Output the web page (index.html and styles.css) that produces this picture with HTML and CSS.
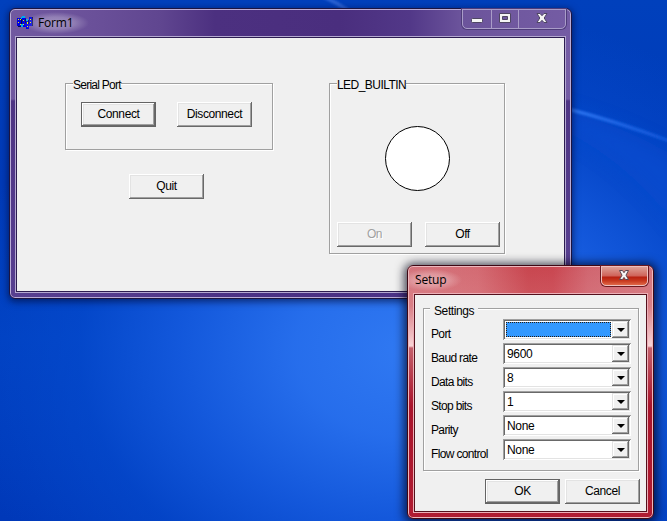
FILE: index.html
```html
<!DOCTYPE html>
<html lang="en">
<head>
<meta charset="utf-8">
<title>Form1</title>
<link rel="stylesheet" href="styles.css">
</head>
<body>
<main class="desktop">
  <svg class="wallpaper" viewBox="0 0 667 521" aria-hidden="true">
    <defs>
      <linearGradient id="beam" x1="571" y1="110" x2="667" y2="142" gradientUnits="userSpaceOnUse">
        <stop offset="0" stop-color="#2d74f0"/><stop offset="1" stop-color="#0f55d8"/>
      </linearGradient>
      <filter id="soft" x="-20%" y="-60%" width="140%" height="220%"><feGaussianBlur stdDeviation="1.2"/></filter>
      <filter id="softer" x="-20%" y="-60%" width="140%" height="220%"><feGaussianBlur stdDeviation="9"/></filter>
    </defs>
    <path d="M540 104Q620 122 680 160V230Q620 150 540 120Z" fill="#0c50d4" opacity=".5" filter="url(#softer)"/>
    <path d="M560 107Q620 122 680 145" fill="none" stroke="url(#beam)" stroke-width="3.500" filter="url(#soft)"/>
    <path d="M322 -4Q336 2 350 12" fill="none" stroke="#2a62d4" stroke-width="4" filter="url(#soft)"/>
  </svg>

  <section class="window form">
    <header class="titlebar">
      <svg class="app-icon" width="17" height="14" viewBox="0 0 17 14" shape-rendering="crispEdges" aria-hidden="true">
        <path fill="#0000e0" d="M0 2h4v8H0zM5 2h4v9H5zM9 4h3v9H9zM12 1h4v9h-4z"/>
        <path fill="#00a8f0" d="M4 1h1v2H4zM5 0h3v2H5zM4 8h2v3H4zM9 3h2v2H9z"/>
        <path fill="#f4f000" d="M1 3h1v1H1zM3 3h1v1H3zM1 6h1v1H1zM3 8h1v1H3zM6 4h1v1H6zM6 8h1v1H6zM10 6h1v2h-1zM10 10h1v1h-1zM13 3h1v1h-1zM13 6h1v1h-1z"/>
        <path fill="#081048" d="M4 3h1v5H4zM8 3h1v4H8zM11 4h1v4h-1zM15 1h1v9h-1zM1 10h3v1H1z"/>
      </svg>
      <h1 class="title">Form1</h1>
      <div class="caption-buttons">
        <span class="cap cap-min"><svg width="12" height="6" viewBox="0 0 12 6"><rect x=".5" y=".5" width="11" height="4" rx="1" fill="#f4f4f4" stroke="#4f4663"/></svg></span>
        <span class="cap cap-max"><svg width="12" height="11" viewBox="0 0 12 11"><path fill="#f4f4f4" stroke="#4f4663" fill-rule="evenodd" d="M.5 .5h11v9H.5zM3.500 3.500v3h5v-3z"/></svg></span>
        <span class="cap cap-close"><svg width="12" height="11" viewBox="0 0 12 11"><path d="M1 .5h3l2 2.200L8 .5h3L8.200 5l2.800 4.500H8L6 7.300 4 9.500H1L3.800 5z" fill="#f4f4f4" stroke="#4f4663"/></svg></span>
      </div>
    </header>
    <div class="client form-client">
      <div class="left-column">
        <div class="group serial">
          <div class="legend serial-legend">Serial Port</div>
          <div class="row"><button class="btn default">Connect</button><button class="btn">Disconnect</button></div>
        </div>
        <button class="btn quit">Quit</button>
      </div>
      <div class="group led">
        <div class="legend led-legend">LED_BUILTIN</div>
        <svg class="lamp" width="65" height="65" viewBox="0 0 65 65"><circle cx="32.5" cy="32.5" r="32" fill="#fff" stroke="#000"/></svg>
        <div class="row"><button class="btn" disabled>On</button><button class="btn">Off</button></div>
      </div>
    </div>
  </section>

  <section class="window setup">
    <header class="titlebar">
      <h1 class="title">Setup</h1>
      <div class="close-red"><svg width="14" height="12" viewBox="0 0 14 12"><path d="M2.500 .5h3l1.500 2.200L8.500 .5h3L9 5.200l2.500 4.300h-3L7 7.400 5.500 9.500h-3L5 5.200z" fill="#f6f6f6" stroke="#5b4550"/></svg></div>
    </header>
    <div class="client setup-client">
      <div class="group settings">
        <div class="legend settings-legend">Settings</div>
        <div class="fields">
          <label>Port</label><div class="combo"><span class="value focused"></span><i class="drop"></i></div>
          <label>Baud rate</label><div class="combo"><span class="value">9600</span><i class="drop"></i></div>
          <label>Data bits</label><div class="combo"><span class="value">8</span><i class="drop"></i></div>
          <label>Stop bits</label><div class="combo"><span class="value">1</span><i class="drop"></i></div>
          <label>Parity</label><div class="combo"><span class="value">None</span><i class="drop"></i></div>
          <label>Flow control</label><div class="combo"><span class="value">None</span><i class="drop"></i></div>
        </div>
      </div>
      <div class="actions"><button class="btn default">OK</button><button class="btn">Cancel</button></div>
    </div>
  </section>
</main>
</body>
</html>
```
FILE: styles.css
```css
* { box-sizing: border-box; }

body {
  margin: 0;
  font: 12px/14px "Liberation Sans", Arial, sans-serif;
  letter-spacing: -0.4px;
  color: #000;
}

.desktop {
  position: relative;
  width: 667px;
  height: 521px;
  overflow: hidden;
  background:
    radial-gradient(ellipse 460px 350px at 410px 350px, #3079f2 0%, rgba(40, 112, 238, .95) 25%, rgba(22, 92, 224, .85) 50%, rgba(6, 76, 208, .6) 72%, rgba(0, 64, 190, 0) 100%),
    linear-gradient(180deg, #0040bc 0%, #003ab8 35%, #0040c0 65%, #0038b8 100%);
}

.wallpaper { position: absolute; inset: 0; width: 667px; height: 521px; }

.window {
  position: absolute;
  display: flex;
  flex-direction: column;
  padding: 0 5px 5px;
  border: 1px solid;
  border-radius: 6px;
}

.form {
  left: 9px;
  top: 8px;
  width: 563px;
  height: 291px;
  border-color: #1c1440;
  background:
    linear-gradient(180deg, transparent 90px, rgba(66, 40, 122, .75) 92px, rgba(74, 50, 136, .65) 100%),
    linear-gradient(90deg, #7159a0 0, #6a5099 85px, #604690 150px, #4c3080 205px, #4a2e7e 330px, #523888 400px, #6b539b 450px, #70589f 500px, #745ca4 100%);
  box-shadow: inset 0 0 0 1px #b9acd6, 0 2px 7px 1px rgba(0, 8, 50, .6);
}

.setup {
  left: 407px;
  top: 265px;
  width: 247px;
  height: 254px;
  border-color: #3e0814;
  background:
    linear-gradient(180deg, transparent 0, rgba(245, 190, 195, .15) 40px, rgba(252, 222, 224, .9) 80px, #c4606c 82px, #aa142c 140px, #b01c32 100%),
    linear-gradient(90deg, #d4747c 0, #d36a72 70px, #c8464f 120px, #c94650 145px, #d0656f 180px, #d3747c 100%);
  box-shadow: inset 0 0 0 1px #eeb8be, 0 1px 10px 3px rgba(0, 0, 20, .7);
}

.titlebar { display: flex; align-items: flex-start; height: 27px; flex: none; }

.app-icon { margin: 7px 0 0 2px; }

.title {
  margin: 3px 0 0 -12px;
  padding: 3px 16px;
  font: 12px/16px "Open Sans", sans-serif;
  letter-spacing: -0.2px;
  background: radial-gradient(closest-side, rgba(255, 255, 255, .36), rgba(255, 255, 255, .25) 55%, rgba(255, 255, 255, 0));
}
.setup .title { margin: 3px 0 0 -14px; clip-path: inset(0 0 0 10px); }

.caption-buttons {
  display: flex;
  width: 104px;
  height: 20px;
  margin-left: auto;
  border: 1px solid #a99cc8;
  border-radius: 0 0 5px 5px;
  box-shadow: 0 0 0 1px #4e3c79;
}
.cap { display: flex; align-items: flex-start; justify-content: center; }
.cap svg, .close-red svg { display: block; }
.cap-min { width: 28px; padding-top: 8px; }
.cap-max { width: 27px; padding-top: 3px; border-left: 1px solid #a99cc8; }
.cap-close { flex: 1; padding-top: 3px; border-left: 1px solid #a99cc8; }

.close-red {
  display: flex;
  justify-content: center;
  width: 47px;
  height: 20px;
  margin-left: auto;
  padding: 3px 1px 0 0;
  border: 1px solid #efc0bd;
  border-radius: 0 0 5px 5px;
  background: linear-gradient(180deg, #dea096 0, #cf6258 9px, #b82010 10px, #c83a20 14px, #e06848 100%);
  box-shadow: 0 0 0 1px #6c1a20;
}

.client {
  flex: 1;
  border: 1px solid #2c1c50;
  outline: 1px solid #b4a8d0;
  background: #f0f0f0;
  margin: 1px 1px 1px;
}
.form-client { display: flex; padding: 45px 0 0 48px; }
.setup-client { border-color: #54101c; outline-color: #edb0b8; padding: 13px 0 0 8px; }

.left-column { width: 264px; }

.group {
  border: 1px solid #a0a0a0;
  box-shadow: 1px 1px 0 #fff, inset 1px 1px 0 #fff;
}
.serial { width: 208px; height: 67px; padding: 0 15px; }
.led { display: flex; flex-direction: column; width: 176px; height: 171px; padding: 0 0 0 7px; }
.settings { width: 216px; height: 163px; padding: 0 7px; }

.legend {
  width: fit-content;
  height: 14px;
  margin: -6px 0 0 -8px;
  background: #f0f0f0;
}
.serial-legend { letter-spacing: -0.75px; }
.serial .serial-legend { margin-left: -8px; }
.led-legend { margin-left: 0; letter-spacing: -0.55px; }
.settings-legend { margin: -5px 0 0 -1px; padding: 0 4px; }

.row { display: flex; justify-content: space-between; }
.serial .row { width: 171px; margin-top: 10px; }
.led .row { width: 163px; margin-top: 31px; }
.lamp { display: block; margin: 34px 0 0 48px; }

.btn {
  width: 75px;
  height: 25px;
  padding: 0 0 2px;
  border: 0;
  font: inherit;
  letter-spacing: inherit;
  color: #000;
  background: #f0f0f0;
  box-shadow: inset -1px -1px 0 #696969, inset 1px 1px 0 #fff, inset -2px -2px 0 #a0a0a0, inset 2px 2px 0 #e3e3e3;
}
.btn.default {
  box-shadow: inset 0 0 0 1px #646464, inset -2px -2px 0 #696969, inset 2px 2px 0 #fff, inset -3px -3px 0 #a0a0a0, inset 3px 3px 0 #e3e3e3;
}
.btn:disabled { color: #a0a0a0; text-shadow: 1px 1px 0 #fff; }
.quit { display: block; margin: 24px 0 0 64px; }

.fields {
  display: grid;
  grid-template-columns: 72px 128px;
  grid-auto-rows: 21px;
  row-gap: 3px;
  margin-top: 1px;
}
.fields label { padding-top: 8px; white-space: nowrap; letter-spacing: -0.65px; }

.combo {
  display: flex;
  padding: 2px;
  background: #fff;
  box-shadow: inset 1px 1px 0 #a0a0a0, inset -1px -1px 0 #fff, inset 2px 2px 0 #696969, inset -2px -2px 0 #e3e3e3;
}
.value { flex: 1; padding: 2px 0 0 2px; letter-spacing: -0.3px; }
.focused { margin: 1px; background: #3399ff; border: 1px dotted #c66a10; outline: 1px dotted #2a1c10; outline-offset: -1px; }
.drop {
  display: flex;
  align-items: center;
  justify-content: center;
  width: 17px;
  background: #f0f0f0;
  box-shadow: inset -1px -1px 0 #696969, inset 1px 1px 0 #e3e3e3, inset -2px -2px 0 #a0a0a0, inset 2px 2px 0 #fff;
}
.drop::before {
  content: "";
  border: solid transparent;
  border-width: 4px 4px 0;
  border-top-color: #000;
}

.actions { display: flex; gap: 5px; margin: 8px 0 0 62px; }
```
